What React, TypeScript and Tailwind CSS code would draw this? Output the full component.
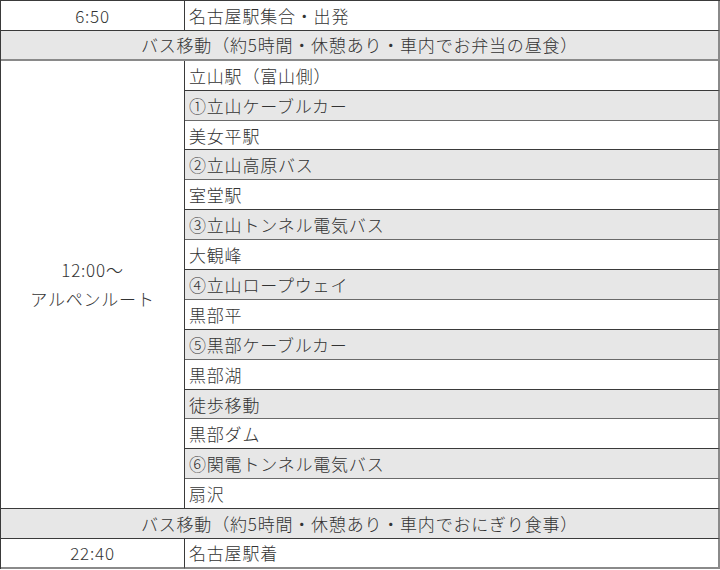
const steps: { label: string; shaded: boolean }[] = [
  { label: "立山駅（富山側）", shaded: false },
  { label: "①立山ケーブルカー", shaded: true },
  { label: "美女平駅", shaded: false },
  { label: "②立山高原バス", shaded: true },
  { label: "室堂駅", shaded: false },
  { label: "③立山トンネル電気バス", shaded: true },
  { label: "大観峰", shaded: false },
  { label: "④立山ロープウェイ", shaded: true },
  { label: "黒部平", shaded: false },
  { label: "⑤黒部ケーブルカー", shaded: true },
  { label: "黒部湖", shaded: false },
  { label: "徒歩移動", shaded: true },
  { label: "黒部ダム", shaded: false },
  { label: "⑥関電トンネル電気バス", shaded: true },
  { label: "扇沢", shaded: false },
];

const font = { fontFamily: '"Noto Sans CJK JP", "Noto Sans", sans-serif' };

export default function App() {
  return (
    <div className="w-[720px] h-[570px] bg-white" style={font}>
      <div className="grid grid-cols-[184px_535px] grid-rows-[repeat(19,29.9px)] border-t border-l border-[#3a3a3a] text-[17px] font-light tracking-[0.8px] text-[#333] leading-none">
        <div className="flex items-center justify-center border-r border-b border-[#3a3a3a]">6:50</div>
        <div className="flex items-center pl-1 border-r-2 border-b border-r-[#8a8a8a] border-b-[#3a3a3a]">名古屋駅集合・出発</div>

        <div className="col-span-2 flex items-center justify-center bg-[#e7e7e7] border-r-2 border-b-2 border-r-[#8a8a8a] border-b-[#8a8a8a]">
          バス移動（約5時間・休憩あり・車内でお弁当の昼食）
        </div>

        <div className="row-span-15 flex flex-col items-center justify-center gap-3 border-r border-b border-[#3a3a3a]">
          <span>12:00～</span>
          <span>アルペンルート</span>
        </div>
        {steps.map((s) => (
          <div
            key={s.label}
            className={`flex items-center pl-1 border-r-2 border-b border-r-[#8a8a8a] ${
              s.shaded ? "bg-[#e7e7e7] border-b-[#6a6a6a]" : "bg-white border-b-[#3a3a3a]"
            }`}
          >
            {s.label}
          </div>
        ))}

        <div className="col-span-2 flex items-center justify-center bg-[#e7e7e7] border-r-2 border-b border-r-[#8a8a8a] border-b-[#3a3a3a]">
          バス移動（約5時間・休憩あり・車内でおにぎり食事）
        </div>

        <div className="flex items-center justify-center border-r border-b-2 border-r-[#3a3a3a] border-b-[#8a8a8a]">22:40</div>
        <div className="flex items-center pl-1 border-r-2 border-b-2 border-[#8a8a8a]">名古屋駅着</div>
      </div>
    </div>
  );
}
